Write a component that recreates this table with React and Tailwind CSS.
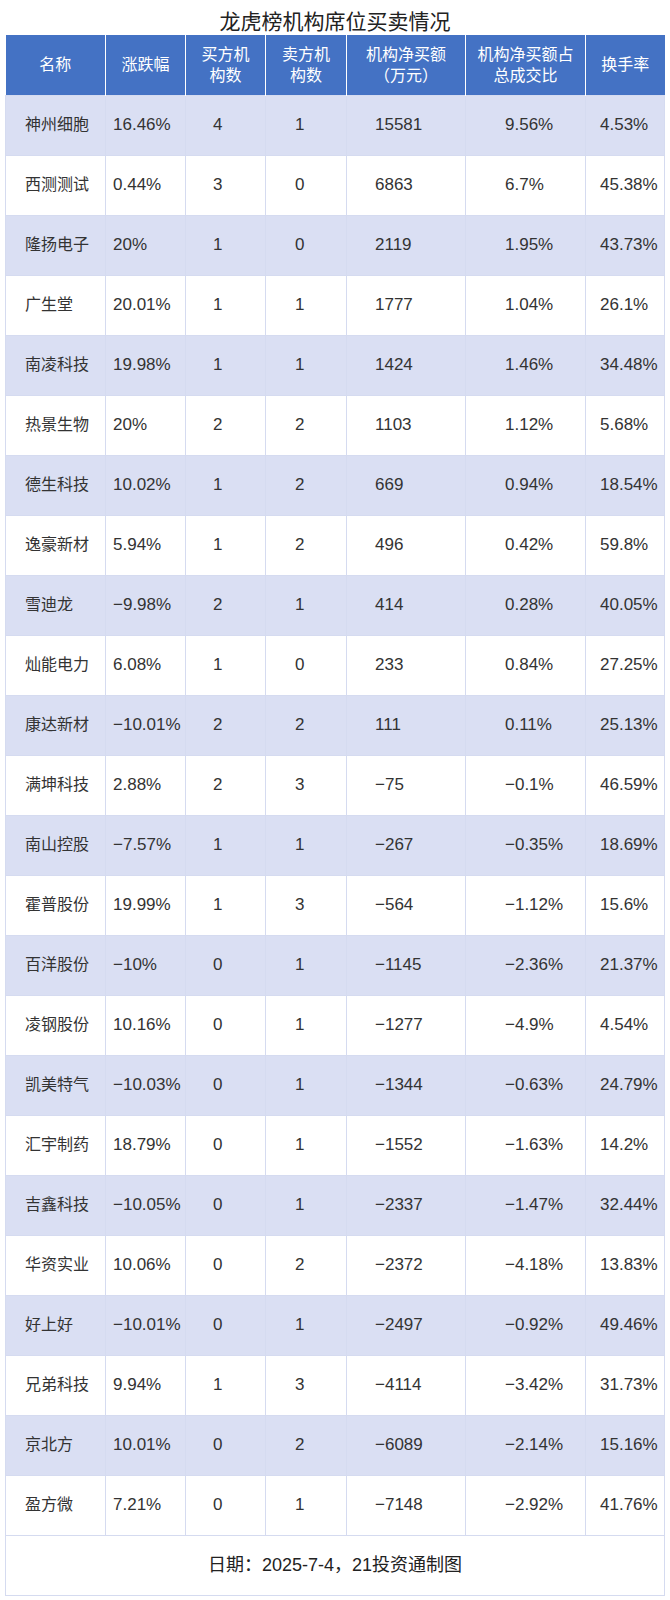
const rows = [
  ["神州细胞", "16.46%", "4", "1", "15581", "9.56%", "4.53%"],
  ["西测测试", "0.44%", "3", "0", "6863", "6.7%", "45.38%"],
  ["隆扬电子", "20%", "1", "0", "2119", "1.95%", "43.73%"],
  ["广生堂", "20.01%", "1", "1", "1777", "1.04%", "26.1%"],
  ["南凌科技", "19.98%", "1", "1", "1424", "1.46%", "34.48%"],
  ["热景生物", "20%", "2", "2", "1103", "1.12%", "5.68%"],
  ["德生科技", "10.02%", "1", "2", "669", "0.94%", "18.54%"],
  ["逸豪新材", "5.94%", "1", "2", "496", "0.42%", "59.8%"],
  ["雪迪龙", "−9.98%", "2", "1", "414", "0.28%", "40.05%"],
  ["灿能电力", "6.08%", "1", "0", "233", "0.84%", "27.25%"],
  ["康达新材", "−10.01%", "2", "2", "111", "0.11%", "25.13%"],
  ["满坤科技", "2.88%", "2", "3", "−75", "−0.1%", "46.59%"],
  ["南山控股", "−7.57%", "1", "1", "−267", "−0.35%", "18.69%"],
  ["霍普股份", "19.99%", "1", "3", "−564", "−1.12%", "15.6%"],
  ["百洋股份", "−10%", "0", "1", "−1145", "−2.36%", "21.37%"],
  ["凌钢股份", "10.16%", "0", "1", "−1277", "−4.9%", "4.54%"],
  ["凯美特气", "−10.03%", "0", "1", "−1344", "−0.63%", "24.79%"],
  ["汇宇制药", "18.79%", "0", "1", "−1552", "−1.63%", "14.2%"],
  ["吉鑫科技", "−10.05%", "0", "1", "−2337", "−1.47%", "32.44%"],
  ["华资实业", "10.06%", "0", "2", "−2372", "−4.18%", "13.83%"],
  ["好上好", "−10.01%", "0", "1", "−2497", "−0.92%", "49.46%"],
  ["兄弟科技", "9.94%", "1", "3", "−4114", "−3.42%", "31.73%"],
  ["京北方", "10.01%", "0", "2", "−6089", "−2.14%", "15.16%"],
  ["盈方微", "7.21%", "0", "1", "−7148", "−2.92%", "41.76%"],
];

// left padding for each column (values are left aligned)
const pads = ["pl-[19px]", "pl-[7px]", "pl-[27px]", "pl-[29px]", "pl-[28px]", "pl-[39px]", "pl-[14px]"];

// full-width punctuation box, so the marks take a whole em like the CJK font does
const Punct = ({ ch, side = "left" }) => (
  <span className={`inline-block w-[1em] ${side === "left" ? "text-left" : "text-right"}`}>{ch}</span>
);

export default function App() {
  return (
    <div
      className="w-[670px] h-[1600px] bg-white text-[#333]"
      style={{ fontFamily: '"Liberation Sans", "Noto Sans CJK SC", sans-serif' }}
    >
      <div className="h-[35px] pt-[9px] text-center text-[21px] leading-[25px] text-[#222]">
        龙虎榜机构席位买卖情况
      </div>
      <table className="ml-[5px] w-[659px] table-fixed border-collapse">
        <colgroup>
          <col className="w-[100px]" />
          <col className="w-[80px]" />
          <col className="w-[80px]" />
          <col className="w-[81px]" />
          <col className="w-[119px]" />
          <col className="w-[120px]" />
          <col className="w-[79px]" />
        </colgroup>
        <thead>
          <tr className="h-[60px] bg-[#4472C4] text-white text-[16px] leading-[21px]">
            <th className="font-normal border-r border-white">名称</th>
            <th className="font-normal border-r border-white">涨跌幅</th>
            <th className="font-normal border-r border-white">
              买方机<br />构数
            </th>
            <th className="font-normal border-r border-white">
              卖方机<br />构数
            </th>
            <th className="font-normal border-r border-white">
              机构净买额<br />
              <Punct ch="（" side="right" />万元<Punct ch="）" />
            </th>
            <th className="font-normal border-r border-white">
              机构净买额占<br />总成交比
            </th>
            <th className="font-normal">换手率</th>
          </tr>
        </thead>
        <tbody>
          {rows.map((r, i) => (
            <tr key={r[0]} className={`h-[60px] ${i % 2 === 0 ? "bg-[#DADFF3]" : "bg-white"}`}>
              {r.map((v, j) => (
                <td
                  key={j}
                  className={`border border-[#D5DBF0] text-left whitespace-nowrap ${pads[j]} ${
                    j === 0 ? "text-[16px]" : "text-[17px]"
                  }`}
                >
                  {v}
                </td>
              ))}
            </tr>
          ))}
          <tr className="h-[60px] bg-white">
            <td colSpan={7} className="border border-[#D5DBF0] text-center text-[18px] text-[#222]">
              日期<Punct ch="：" />2025-7-4<Punct ch="，" />21投资通制图
            </td>
          </tr>
        </tbody>
      </table>
    </div>
  );
}
